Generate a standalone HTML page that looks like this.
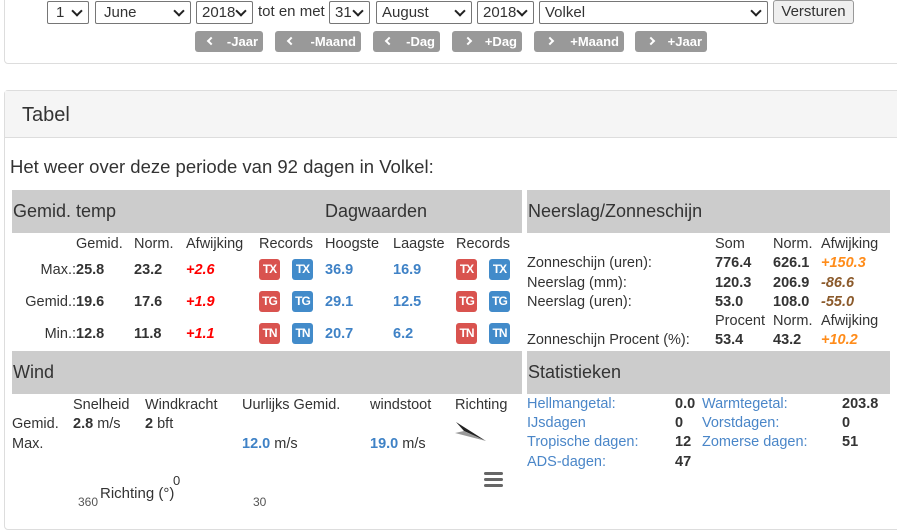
<!DOCTYPE html>
<html><head><meta charset="utf-8"><style>
*{margin:0;padding:0;box-sizing:border-box}
body{width:897px;height:499px;overflow:hidden;background:#fff;font-family:"Liberation Sans","DejaVu Sans",sans-serif;color:#333;font-size:14.5px;position:relative}
.a{position:absolute;white-space:nowrap;line-height:18px}
.sel{position:absolute;top:1px;height:23px;border:1px solid #767676;border-radius:2px;background:#fff;font-size:15px;line-height:21px;padding-left:8px}
.sel:after{content:"";position:absolute;right:7px;top:5px;width:6px;height:6px;border-right:2px solid #222;border-bottom:2px solid #222;transform:rotate(45deg)}
.btn{position:absolute;top:31px;height:21px;background:#999;border-radius:3px;color:#fff;font-weight:bold;font-size:13px;line-height:21px}
.btn i{position:absolute;left:13px;top:7px;width:6px;height:6px;border-left:2px solid #fff;border-bottom:2px solid #fff;transform:rotate(45deg)}
.btn i.n{transform:rotate(-135deg)}
.btn b{position:absolute;right:5px}
.hd{position:absolute;background:#ccc;height:43px;font-size:18px;line-height:43px;padding-left:1px;color:#333}
.b{font-weight:bold}
.bl{color:#3f82c6}
.bd{position:absolute;width:21px;height:21px;border-radius:3px;color:#fff;font-weight:bold;font-size:12px;line-height:21px;text-align:center;letter-spacing:-1px}
.r{background:#d9534f}.u{background:#428bca}
.red{color:#f00;font-style:italic;font-weight:bold}
.or{color:#ff8c1a;font-style:italic;font-weight:bold}
.br{color:#8b5a2b;font-style:italic;font-weight:bold}
</style></head><body>
<div style="position:absolute;left:4px;top:-10px;width:900px;height:74px;border:1px solid #ddd;border-radius:4px"></div>
<div class="sel" style="left:47px;width:42px">1</div>
<div class="sel" style="left:95px;width:96px">June</div>
<div class="sel" style="left:196px;width:57px;padding-left:5px">2018</div>
<div class="a" style="left:258px;top:3px;font-size:15px">tot en met</div>
<div class="sel" style="left:329px;width:41px;padding-left:5px">31</div>
<div class="sel" style="left:376px;width:96px;padding-left:5px">August</div>
<div class="sel" style="left:477px;width:57px;padding-left:5px">2018</div>
<div class="sel" style="left:539px;width:229px;padding-left:5px">Volkel</div>
<div style="position:absolute;left:773px;top:0;width:81px;height:24px;border:1px solid #999;border-radius:3px;background:#efefef;font-size:15px;line-height:22px;text-align:center">Versturen</div>
<div class="btn" style="left:195px;width:68px"><i></i><b>-Jaar</b></div>
<div class="btn" style="left:275px;width:86px"><i></i><b>-Maand</b></div>
<div class="btn" style="left:373px;width:67px"><i></i><b>-Dag</b></div>
<div class="btn" style="left:452px;width:70px"><i class="n"></i><b>+Dag</b></div>
<div class="btn" style="left:534px;width:90px"><i class="n"></i><b>+Maand</b></div>
<div class="btn" style="left:635px;width:72px"><i class="n"></i><b>+Jaar</b></div>

<div style="position:absolute;left:4px;top:90px;width:900px;height:440px;border:1px solid #ddd;border-radius:4px"></div>
<div style="position:absolute;left:5px;top:91px;width:892px;height:47px;background:#f5f5f5;border-bottom:1px solid #ddd"></div>
<div class="a" style="left:22px;top:103px;font-size:20px;line-height:24px">Tabel</div>
<div class="a" style="left:10px;top:156px;font-size:18.5px;line-height:22px">Het weer over deze periode van 92 dagen in Volkel:</div>

<div class="hd" style="left:12px;top:190px;width:510px">Gemid. temp<span style="position:absolute;left:313px">Dagwaarden</span></div>
<div class="hd" style="left:527px;top:190px;width:363px">Neerslag/Zonneschijn</div>
<div class="hd" style="left:12px;top:351px;width:510px">Wind</div>
<div class="hd" style="left:527px;top:351px;width:363px">Statistieken</div>

<div class="a" style="left:76px;top:235px">Gemid.</div>
<div class="a" style="left:134px;top:235px">Norm.</div>
<div class="a" style="left:186px;top:235px">Afwijking</div>
<div class="a" style="left:259px;top:235px">Records</div>
<div class="a" style="left:325px;top:235px">Hoogste</div>
<div class="a" style="left:393px;top:235px">Laagste</div>
<div class="a" style="left:456px;top:235px">Records</div>

<div class="a" style="right:821px;top:261px">Max.:</div>
<div class="a" style="right:821px;top:293px">Gemid.:</div>
<div class="a" style="right:821px;top:325px">Min.:</div>
<div class="a b" style="left:76px;top:261px">25.8</div>
<div class="a b" style="left:76px;top:293px">19.6</div>
<div class="a b" style="left:76px;top:325px">12.8</div>
<div class="a b" style="left:134px;top:261px">23.2</div>
<div class="a b" style="left:134px;top:293px">17.6</div>
<div class="a b" style="left:134px;top:325px">11.8</div>
<div class="a red" style="left:186px;top:261px">+2.6</div>
<div class="a red" style="left:186px;top:293px">+1.9</div>
<div class="a red" style="left:186px;top:325px">+1.1</div>
<div class="a b bl" style="left:325px;top:261px">36.9</div>
<div class="a b bl" style="left:325px;top:293px">29.1</div>
<div class="a b bl" style="left:325px;top:325px">20.7</div>
<div class="a b bl" style="left:393px;top:261px">16.9</div>
<div class="a b bl" style="left:393px;top:293px">12.5</div>
<div class="a b bl" style="left:393px;top:325px">6.2</div>
<div class="bd r" style="left:259px;top:259px">TX</div><div class="bd u" style="left:292px;top:259px">TX</div>
<div class="bd r" style="left:259px;top:291px">TG</div><div class="bd u" style="left:292px;top:291px">TG</div>
<div class="bd r" style="left:259px;top:323px">TN</div><div class="bd u" style="left:292px;top:323px">TN</div>
<div class="bd r" style="left:456px;top:259px">TX</div><div class="bd u" style="left:489px;top:259px">TX</div>
<div class="bd r" style="left:456px;top:291px">TG</div><div class="bd u" style="left:489px;top:291px">TG</div>
<div class="bd r" style="left:456px;top:323px">TN</div><div class="bd u" style="left:489px;top:323px">TN</div>

<div class="a" style="left:715px;top:235px">Som</div>
<div class="a" style="left:773px;top:235px">Norm.</div>
<div class="a" style="left:821px;top:235px">Afwijking</div>
<div class="a" style="left:527px;top:254px">Zonneschijn (uren):</div>
<div class="a" style="left:527px;top:274px">Neerslag (mm):</div>
<div class="a" style="left:527px;top:293px">Neerslag (uren):</div>
<div class="a b" style="left:715px;top:254px">776.4</div>
<div class="a b" style="left:715px;top:274px">120.3</div>
<div class="a b" style="left:715px;top:293px">53.0</div>
<div class="a b" style="left:773px;top:254px">626.1</div>
<div class="a b" style="left:773px;top:274px">206.9</div>
<div class="a b" style="left:773px;top:293px">108.0</div>
<div class="a or" style="left:821px;top:254px">+150.3</div>
<div class="a br" style="left:821px;top:274px">-86.6</div>
<div class="a br" style="left:821px;top:293px">-55.0</div>
<div class="a" style="left:715px;top:312px">Procent</div>
<div class="a" style="left:773px;top:312px">Norm.</div>
<div class="a" style="left:821px;top:312px">Afwijking</div>
<div class="a" style="left:527px;top:331px">Zonneschijn Procent (%):</div>
<div class="a b" style="left:715px;top:331px">53.4</div>
<div class="a b" style="left:773px;top:331px">43.2</div>
<div class="a or" style="left:821px;top:331px">+10.2</div>

<div class="a" style="left:73px;top:396px">Snelheid</div>
<div class="a" style="left:145px;top:396px">Windkracht</div>
<div class="a" style="left:242px;top:396px">Uurlijks Gemid.</div>
<div class="a" style="left:370px;top:396px">windstoot</div>
<div class="a" style="left:455px;top:396px">Richting</div>
<div class="a" style="left:12px;top:415px">Gemid.</div>
<div class="a" style="left:12px;top:435px">Max.</div>
<div class="a" style="left:73px;top:415px"><b>2.8</b> m/s</div>
<div class="a" style="left:145px;top:415px"><b>2</b> bft</div>
<div class="a" style="left:242px;top:435px"><b class="bl">12.0</b> m/s</div>
<div class="a" style="left:370px;top:435px"><b class="bl">19.0</b> m/s</div>
<svg style="position:absolute;left:454px;top:420px" width="34" height="24"><polygon points="2,2 32,21 10,11" fill="#222"/><polygon points="1,13 10,11 32,21" fill="#999"/></svg>
<div style="position:absolute;left:484px;top:472px;width:19px;height:3px;background:#666;border-radius:2px"></div>
<div style="position:absolute;left:484px;top:478px;width:19px;height:3px;background:#666;border-radius:2px"></div>
<div style="position:absolute;left:484px;top:484px;width:19px;height:3px;background:#666;border-radius:2px"></div>
<div class="a" style="left:173px;top:472px;font-size:13px">0</div>
<div class="a" style="left:100px;top:485px;font-size:15px">Richting (°)</div>
<div class="a" style="left:78px;top:493px;font-size:12px;color:#555">360</div>
<div class="a" style="left:253px;top:493px;font-size:12px;color:#555">30</div>

<div class="a" style="left:527px;top:395px;color:#4a86c8">Hellmangetal:</div>
<div class="a" style="left:527px;top:414px;color:#4a86c8">IJsdagen</div>
<div class="a" style="left:527px;top:433px;color:#4a86c8">Tropische dagen:</div>
<div class="a" style="left:527px;top:453px;color:#4a86c8">ADS-dagen:</div>
<div class="a b" style="left:675px;top:395px">0.0</div>
<div class="a b" style="left:675px;top:414px">0</div>
<div class="a b" style="left:675px;top:433px">12</div>
<div class="a b" style="left:675px;top:453px">47</div>
<div class="a" style="left:702px;top:395px;color:#4a86c8">Warmtegetal:</div>
<div class="a" style="left:702px;top:414px;color:#4a86c8">Vorstdagen:</div>
<div class="a" style="left:702px;top:433px;color:#4a86c8">Zomerse dagen:</div>
<div class="a b" style="left:842px;top:395px">203.8</div>
<div class="a b" style="left:842px;top:414px">0</div>
<div class="a b" style="left:842px;top:433px">51</div>
</body></html>
